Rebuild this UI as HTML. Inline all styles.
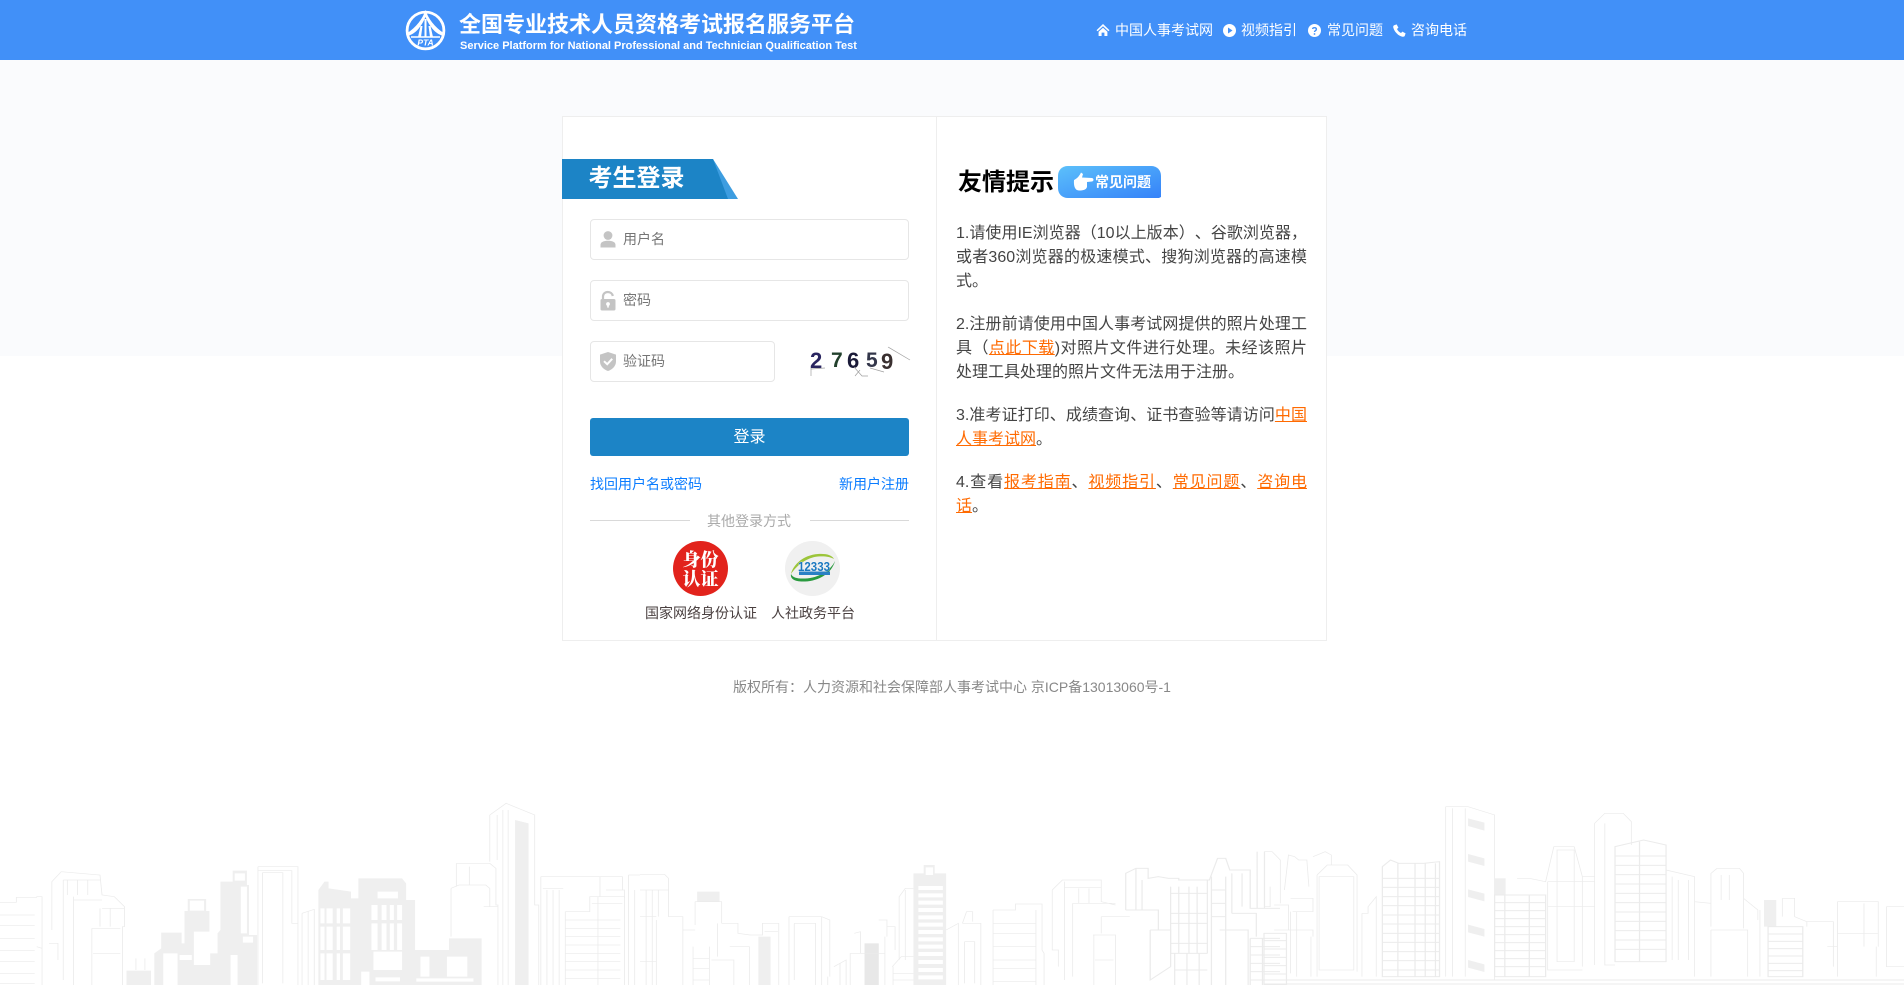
<!DOCTYPE html>
<html lang="zh-CN">
<head>
<meta charset="utf-8">
<title>全国专业技术人员资格考试报名服务平台</title>
<style>
html,body{margin:0;padding:0;width:1904px;height:985px;overflow:hidden;background:#fff;font-family:"Liberation Sans","Noto Sans CJK SC",sans-serif;}
.a{position:absolute;white-space:nowrap;}
a{color:inherit;}
#hd{left:0;top:0;width:1904px;height:60px;background:#4190f8;}
#lt{left:0;top:60px;width:1904px;height:296px;background:#fafbfd;}
#card{left:562px;top:116px;width:763px;height:523px;background:#fff;border:1px solid #eee;}
#div{left:936px;top:117px;width:1px;height:523px;background:#eee;}
.nav{color:#fff;font-size:14px;line-height:20px;top:20px;}
.in{left:590px;box-sizing:border-box;width:319px;height:41px;border:1px solid #e6e6e6;border-radius:4px;background:#fff;}
.ph{left:623px;color:#757575;font-size:14px;line-height:20px;}
.lnk{color:#0a7cff;font-size:14px;line-height:20px;top:474px;}
.tip{left:956px;width:351px;color:#444;font-size:16px;line-height:24px;text-spacing-trim:space-all;}
.tip div{height:24px;white-space:normal;}
.tip .j{text-align:justify;text-align-last:justify;text-justify:inter-character;}
.tip a{color:#ff6a00;text-decoration:underline;}
svg{position:absolute;overflow:visible;}
</style>
</head>
<body>
<div class="a" id="lt"></div>

<!-- skyline -->
<svg style="left:0;top:0" width="1904" height="985" viewBox="0 0 1904 985">
<defs><clipPath id="c"><rect x="0" y="780" width="1904" height="205"/></clipPath></defs>
<g clip-path="url(#c)">
<g transform="translate(0,780) scale(.40816,.33333)" fill="none" stroke="#ebebeb" stroke-width="2">
<g fill="#efefef" stroke="none">
<path d="M378 520L395 505V458H445V490H452V393H460V357H505V393H513V520H533V460L540 450V305H570V272H605V315H610V465H630V615H378Z"/>
<path d="M780 365V330L795 305H805V325L860 335V355H878V295H985L995 310V360H1017V510H1100V475H1180V615H905V575H885V615H780Z"/>
<path d="M1262 120L1295 130V615H1262Z"/>
<path d="M310 572H370V615H310Z"/>
</g>
<g fill="#fff" stroke="none">
<path d="M475 455H515V555H475ZM565 525H582V615H565ZM440 525H470V540H440ZM590 320H605V460H590ZM595 470H620V488H595ZM575 280H600V302H575ZM465 362H500V392H465ZM400 520H435V615H400Z"/>
<path d="M785 385H795V430H785ZM800 385H815V430H800ZM825 385H833V430H825ZM840 385H858V430H840ZM785 440H795V510H785ZM800 440H815V510H800ZM825 440H833V510H825ZM840 440H858V510H840ZM785 520H795V600H785ZM800 520H815V600H800ZM825 520H833V600H825ZM840 520H858V600H840Z"/>
<path d="M910 375H925V420H910ZM935 375H947V420H935ZM955 375H965V420H955ZM973 375H985V420H973ZM910 430H925V510H910ZM935 430H947V510H935ZM955 430H965V510H955ZM973 430H985V510H973ZM915 515H985V570H915ZM925 335H975V355H925ZM1030 530H1052V590H1030ZM1095 530H1145V590H1095ZM1020 595H1160V605H1020ZM920 592H980V604H920Z"/>
</g>
<path d="M0 367H40V352H90V350H103V505L90 500M103 505V615M0 405H85M0 437H85M0 475H85M0 512H85M0 545H85M0 580H85M0 610H85"/>
<path d="M127 305L150 275L245 285L250 345L280 350L305 380V440H300V615M127 305V450M155 300V600M165 300V345M190 300V345M215 300V345M180 350V615M180 360H250M250 385H305M245 385V440M270 385V440M225 445H295M225 445V615M228 520H295M120 490H142V540M155 300H245"/>
<path d="M333 535V570M355 535V570"/>
<path d="M632 260H730V615M632 260V615M643 278H693V610M643 278V610M632 272H715V430H730M715 272V430"/>
<path d="M740 400L770 388V615M740 400V615M755 395V615"/>
<path d="M1200 105L1240 70L1310 105V375H1320V615M1200 105V245M1218 105V240M1232 90V615M1245 90V615M1118 250H1200L1215 265V375H1220V615M1118 250V320M1150 260V315M1105 325L1125 315H1190L1200 325V380M1105 325V470M1185 380H1220"/>
<path d="M1325 290H1525V330M1330 325H1380M1340 330V615M1355 330V615M1370 330V615M1325 290V615M1470 290V350M1485 330H1530V355"/>
<path d="M1385 395H1445V350H1530V615M1385 395V615M1465 350V615M1385 420H1520M1385 445H1520M1385 470H1520M1385 495H1520M1385 520H1520M1385 545H1520M1385 570H1520M1385 595H1520M1450 370H1525"/>
<path d="M1540 285H1568M1540 285V615M1555 330V615"/>
</g>
<g transform="translate(640,780) scale(.40816,.33333)" fill="none" stroke="#ebebeb" stroke-width="2">
<g fill="#efefef" stroke="none">
<path d="M140 335H195V365H140Z"/>
<path d="M290 470H320V615H290Z"/>
<path d="M670 280H695V255H722V280H750V615H670Z"/>
</g>
<path d="M550 490H585V615H550Z" fill="#e8e8e8" stroke="none"/>
<g fill="#fff" stroke="none">
<path d="M682 318H742V330H682ZM682 340H742V352H682ZM682 362H742V374H682ZM682 384H742V396H682ZM682 406H742V418H682ZM682 428H742V440H682ZM682 450H742V462H682ZM682 472H742V484H682ZM682 494H742V506H682ZM682 516H742V528H682ZM682 540H742V552H682ZM682 564H742V576H682ZM682 586H742V598H682ZM700 262H718V285H700Z"/>
</g>
<path d="M130 535H170M130 565H170M130 600H170M130 500V615M170 500V615"/>
<path d="M0 283H60L70 295V410H105V615M0 330H70M15 330V615M30 330V615M45 330V410M40 420V615M0 410H40M0 545H40"/>
<path d="M135 365H200V430M135 365V435M105 450H135M200 430H240V460L270 465H300V430H340V615M190 430V530M175 540H230V615M220 500H268V615M305 455H338"/>
<path d="M365 410H445L465 420V590M365 410V615M378 430H430V615M378 430V600M445 410V615M460 590V615"/>
<path d="M475 560L505 540V615M490 550V615M525 460L540 455V520M515 520V615M515 520H600M585 420H605V470M605 440H625V510M600 470V615M618 560L640 530H670M620 560V615M620 580H670M620 600H670"/>
<path d="M635 420V350L650 325H670M650 330V540M635 420V540"/>
<path d="M790 430H835V615M790 430L800 395H815V425M795 485H820V610M795 485V610M750 450L780 430V615"/>
<path d="M865 390H920V372H985V510L990 520V615M865 390V615M865 430H970M865 460H970M865 500H970M865 540H970M865 565H970M865 605H970M970 390V615"/>
<path d="M1010 330L1035 300H1130V365L1165 375M1010 330V510H1025V560M1040 305V600M1060 370H1165M1060 370V590M1075 325V370M1100 325V370M1130 410H1200M1130 410V460M1110 465H1165V615M1112 465V615M1115 540H1160M1040 322H1130"/>
<g stroke-width="3">
<path d="M1190 390V280L1215 265H1245V295L1270 290L1295 295H1320V300H1395L1415 235H1435L1445 270H1495V385H1512V215M1530 215V385M1495 385H1568"/>
<path d="M1190 390H1270V450M1215 265V390M1230 300V390M1250 450H1300V560L1250 600V450"/>
<path d="M1300 320V520M1320 320V520M1345 320V520M1365 320V520M1390 300V520M1300 340H1390M1300 400H1390M1300 430H1390M1300 490H1390M1300 520H1390M1310 520V615M1340 520V615M1370 520V615M1310 570H1390"/>
<path d="M1400 290V615M1435 290V615M1400 330H1435M1400 370H1435M1400 410H1435M1450 280V400M1475 280V380M1450 400H1510V470M1420 450H1490V615"/>
<path d="M1495 475H1568M1495 500H1568M1495 525H1568M1495 550H1568M1495 575H1568M1495 600H1568M1495 475V615M1525 475V615"/>
</g>
</g>
<g transform="translate(1264,780) scale(.40816,.33333)" fill="none" stroke="#ebebeb" stroke-width="2">
<g fill="#efefef" stroke="none">
<path d="M500 115L540 128V152L500 138ZM500 222L540 235V258L500 245ZM500 328L540 341V364L500 351ZM500 434L540 447V470L500 457ZM500 540L540 553V576L500 563Z"/>
<path d="M565 295H592V345H565Z"/>
<path d="M1225 360H1255V440H1225Z"/>
</g>
<g stroke-width="3">
<path d="M0 600H1568M0 612H1568"/>
<path d="M290 260L310 240L330 250H390L430 245V590H290ZM328 250V590M370 250V590M395 250V590M420 250V590M290 295H430M290 322H430M290 350H430M290 377H430M290 405H430M290 432H430M290 460H430M290 487H430M290 515H430M290 542H430M290 570H430"/>
<path d="M565 345H690V590H565ZM590 345V590M650 345V590M565 368H690M565 392H690M565 416H690M565 440H690M565 464H690M565 488H690M565 512H690M565 536H690M565 560H690"/>
<path d="M860 200L930 180L985 195V545H860ZM920 185V545M860 228H985M860 256H985M860 284H985M860 312H985M860 340H985M860 368H985M860 396H985M860 424H985M860 452H985M860 480H985M860 508H985"/>
<path d="M0 460H55V615H0ZM0 482H55M0 507H55M0 532H55M0 557H55M0 582H55"/>
<path d="M1235 440H1320V590H1235ZM1235 462H1320M1235 484H1320M1235 506H1320M1235 528H1320M1235 550H1320M1235 572H1320"/>
</g>
<path d="M0 215L20 215L40 240V370M0 380H15V320M50 330L60 225L75 230L85 240H105L110 320M120 230L150 215L165 225V255M65 355H120V395H70M80 395V590M25 375H60V450M25 450H120V470M115 470V590M65 395V580"/>
<path d="M130 285L155 255H205L228 285V575M130 285V590M135 290H220V570H135Z"/>
<path d="M240 400H255V380L275 350V590M240 400V590"/>
<path d="M445 80H500L565 105V600M445 80V590M462 85V590M493 85V590"/>
<path d="M620 295H650L690 305L710 200H760L780 290H810V130L835 100H880L900 125V185M718 210H760V545H718ZM695 305H810M695 380H810M695 305V570H780M780 290V560M835 130V555H860M810 130V555M900 125V195"/>
<path d="M985 270L1055 290V365L1095 370V280L1110 265H1165L1175 280V355L1210 390V420M1000 290V540M1015 300V540M1040 300V540M1055 290V590M1120 285V360M1140 285V360M1095 370V440"/>
<path d="M1095 450H1185V590M1095 450V590M1175 355V445"/>
<path d="M1270 355H1300V410L1330 425V440M1270 355V410M1215 390V590M1330 425H1395V560"/>
<path d="M1405 365H1505V500M1405 365V500M1470 370V500M1405 460H1505M1405 500V590M1500 500V590M1380 500H1405"/>
<path d="M1525 380H1568M1525 380V560H1568"/>
</g>
</g>
</svg>

<div class="a" id="hd"></div>
<!-- logo -->
<svg style="left:405px;top:9px" width="41" height="42" viewBox="0 0 41 42">
<circle cx="20.5" cy="21.5" r="18.4" fill="none" stroke="#fff" stroke-width="2.8"/>
<path d="M20.500 1C18 9 11.500 18.500 1.500 24.500L3 27C11 24 15.500 19 20.500 8C25.500 19 30 24 38 27L39.500 24.500C29.500 18.500 23 9 20.500 1Z" fill="#fff"/>
<path d="M15.500 17L13 28H16L17.500 17ZM25.500 17L28 28H25L23.500 17ZM19.500 10H21.500V28H19.500Z" fill="#fff"/>
<path d="M6 28H35" stroke="#fff" stroke-width="1.6"/>
<text x="20.500" y="36.500" text-anchor="middle" font-family="Liberation Sans" font-size="8.500" font-weight="700" font-style="italic" fill="#fff">PTA</text>
</svg>
<div class="a" style="left:459px;top:9px;color:#fff;font-size:22px;font-weight:700;line-height:32px;">全国专业技术人员资格考试报名服务平台</div>
<div class="a" style="left:460px;top:39px;color:#fff;font-size:11px;font-weight:700;line-height:14px;">Service Platform for National Professional and Technician Qualification Test</div>

<!-- nav -->
<svg style="left:1096px;top:23px" width="14" height="14" viewBox="0 0 14 14"><path d="M7 1L0.5 7.2L1.6 8.2L7 3.2L12.4 8.2L13.5 7.2ZM2.6 8.8V13H5.6V9.6H8.4V13H11.4V8.8L7 4.7Z" fill="#fff"/></svg>
<div class="a nav" style="left:1115px;">中国人事考试网</div>
<svg style="left:1223px;top:24px" width="13" height="13" viewBox="0 0 13 13"><circle cx="6.5" cy="6.5" r="6.5" fill="#fff"/><path d="M5 3.5L9.5 6.5L5 9.5Z" fill="#4190f8"/></svg>
<div class="a nav" style="left:1241px;">视频指引</div>
<svg style="left:1308px;top:24px" width="13" height="13" viewBox="0 0 13 13"><circle cx="6.5" cy="6.5" r="6.5" fill="#fff"/><path d="M4.6 5C4.8 3.2 8.4 3.2 8.4 5.2C8.4 6.6 6.5 6.5 6.5 8" fill="none" stroke="#4190f8" stroke-width="1.4"/><circle cx="6.5" cy="10" r=".9" fill="#4190f8"/></svg>
<div class="a nav" style="left:1327px;">常见问题</div>
<svg style="left:1393px;top:24px" width="13" height="13" viewBox="0 0 13 13"><path d="M1.2 1.2L3.6.4L5.4 3.6L4 5C4.8 6.8 6.2 8.2 8 9L9.4 7.6L12.6 9.4L11.8 11.8C11.4 12.8 10.2 13 9 12.6C5 11.4 1.6 8 .4 4C0 2.8.2 1.6 1.2 1.2Z" fill="#fff"/></svg>
<div class="a nav" style="left:1411px;">咨询电话</div>

<!-- card -->
<div class="a" id="card"></div>
<div class="a" id="div"></div>

<!-- banner -->
<svg style="left:562px;top:159px" width="176" height="40" viewBox="0 0 176 40">
<path d="M151 0L176 40H150Z" fill="#3d9de0"/>
<path d="M0 0H151L166 40H0Z" fill="#1c84c6"/>
</svg>
<div class="a" style="left:588.500px;top:162px;color:#fff;font-size:24px;font-weight:700;line-height:34px;">考生登录</div>

<!-- inputs -->
<div class="a in" style="top:219px;"></div>
<svg style="left:600px;top:231px" width="16" height="17" viewBox="0 0 16 17"><circle cx="8" cy="4.5" r="4.4" fill="#c4c4c4"/><path d="M.5 16.5V14C.5 11 4 9.8 8 9.8S15.5 11 15.5 14V16.5Z" fill="#c4c4c4"/></svg>
<div class="a ph" style="top:229px;">用户名</div>

<div class="a in" style="top:280px;"></div>
<svg style="left:600px;top:291px" width="16" height="20" viewBox="0 0 16 20"><path d="M3 9V5.5C3 2.8 5.2 1 7.8 1C10.4 1 12.4 2.7 12.8 5" fill="none" stroke="#c4c4c4" stroke-width="2.2"/><rect x=".5" y="8" width="15" height="11.5" rx="1.6" fill="#c4c4c4"/><circle cx="8" cy="13" r="1.9" fill="#fff"/><rect x="7.2" y="13" width="1.6" height="3.6" fill="#fff"/></svg>
<div class="a ph" style="top:290px;">密码</div>

<div class="a in" style="top:341px;width:185px;"></div>
<svg style="left:600px;top:352px" width="16" height="19" viewBox="0 0 16 19"><path d="M8 0L16 2.6V9.5C16 14 12.5 17.4 8 19C3.5 17.4 0 14 0 9.5V2.6Z" fill="#c4c4c4"/><path d="M4 9.2L7.2 12.2L12.2 6.8" fill="none" stroke="#fff" stroke-width="2"/></svg>
<div class="a ph" style="top:351px;">验证码</div>

<!-- captcha -->
<svg style="left:808px;top:343px" width="102" height="36" viewBox="0 0 102 36" font-family="Liberation Sans" font-weight="700" font-size="22">
<text x="2" y="25" fill="#2a2560">2</text>
<text x="23" y="24" fill="#22402c" font-size="21">7</text>
<text x="39" y="25" fill="#1a1a38">6</text>
<text x="58" y="24" fill="#33364a" font-size="21">5</text>
<text x="73" y="26" fill="#3a3030">9</text>
<path d="M80 4L102 17M3 25V33M3 26L17 25M46 24L54 33L60 33M47 33L52 27M62 25L76 29" fill="none" stroke="#a0a0a0" stroke-width=".7"/>
</svg>

<!-- button -->
<div class="a" style="left:590px;top:418px;width:319px;height:38px;background:#1c84c6;border-radius:3px;color:#fff;font-size:16px;line-height:40px;text-align:center;">登录</div>

<!-- links -->
<div class="a lnk" style="left:590px;">找回用户名或密码</div>
<div class="a lnk" style="left:839px;">新用户注册</div>

<!-- other -->
<div class="a" style="left:590px;top:520px;width:100px;height:1px;background:#d9d9d9;"></div>
<div class="a" style="left:810px;top:520px;width:99px;height:1px;background:#d9d9d9;"></div>
<div class="a" style="left:707px;top:511px;color:#aaa;font-size:14px;line-height:20px;">其他登录方式</div>

<!-- badges -->
<svg style="left:673px;top:541px" width="55" height="55" viewBox="0 0 55 55">
<circle cx="27.5" cy="27.5" r="27.5" fill="#e2231c"/>
<text x="27.5" y="25" text-anchor="middle" font-family="Noto Serif CJK SC,serif" font-weight="900" font-size="18" fill="#fff">身份</text>
<text x="27.5" y="44.500" text-anchor="middle" font-family="Noto Serif CJK SC,serif" font-weight="900" font-size="18" fill="#fff">认证</text>
</svg>
<svg style="left:785px;top:541px" width="55" height="55" viewBox="0 0 55 55">
<circle cx="27.5" cy="27.5" r="27.5" fill="#f0f0f0"/>
<path d="M6 33C8 24 18 14 33 13C41 12.500 47 14 49 18C45 15.500 39 15 33 15.500C22 16.500 12 24 6 33Z" fill="#9cc53a"/>
<path d="M6 33C5 38 10 41 20 40.500C34 40 47 32 50 20C46 29 34 37 20 37.500C13 37.800 8 37 6 33Z" fill="#2a9a3f"/>
<rect x="14" y="30.500" width="31" height="3.500" fill="#2a80c4"/>
<text x="29" y="30" text-anchor="middle" font-family="Liberation Sans" font-weight="700" font-size="13" textLength="32" lengthAdjust="spacingAndGlyphs" fill="#1b78bf" stroke="#fff" stroke-width=".4" paint-order="stroke">12333</text>
</svg>
<div class="a" style="left:645px;top:603px;color:#4a4040;font-size:14px;line-height:20px;">国家网络身份认证</div>
<div class="a" style="left:771px;top:603px;color:#4a4040;font-size:14px;line-height:20px;">人社政务平台</div>

<!-- right -->
<div class="a" style="left:958px;top:166px;color:#000;font-size:24px;font-weight:700;line-height:34px;">友情提示</div>
<svg style="left:1058px;top:166px" width="103" height="32" viewBox="0 0 103 32">
<defs><linearGradient id="g" x1="0" y1="0" x2="1" y2="1"><stop offset="0" stop-color="#5cc0fa"/><stop offset="1" stop-color="#3582f9"/></linearGradient></defs>
<path d="M10 0H93C99 0 103 4 103 10V31L101 32H10C4 32 0 28 0 22V10C0 4 4 0 10 0Z" fill="url(#g)"/>
<path d="M16 14C18 13 21 11 23 6.500L25 8L24 11.500L34 12C36 12.500 36 15 34 15.500L29 16L29 21C28 24 25 24.500 21 24.500C17 24.500 15.500 20 16 14Z" fill="#fff"/>
<text x="37" y="21" font-family="Liberation Sans,Noto Sans CJK SC,sans-serif" font-weight="700" font-size="14" fill="#fff">常见问题</text>
</svg>

<div class="a tip" style="top:222px;"><div class="j">1.请使用IE浏览器（10以上版本）、谷歌浏览器，</div><div class="j">或者360浏览器的极速模式、搜狗浏览器的高速模</div><div>式。</div></div>
<div class="a tip" style="top:313px;"><div class="j">2.注册前请使用中国人事考试网提供的照片处理工</div><div class="j">具（<a>点此下载</a>)对照片文件进行处理。未经该照片</div><div>处理工具处理的照片文件无法用于注册。</div></div>
<div class="a tip" style="top:404px;"><div class="j">3.准考证打印、成绩查询、证书查验等请访问<a>中国</a></div><div><a>人事考试网</a>。</div></div>
<div class="a tip" style="top:471px;"><div class="j">4.查看<a>报考指南</a>、<a>视频指引</a>、<a>常见问题</a>、<a>咨询电</a></div><div><a>话</a>。</div></div>

<!-- footer -->
<div class="a" style="left:733px;top:677px;color:#888;font-size:14px;line-height:20px;">版权所有：人力资源和社会保障部人事考试中心 京ICP备13013060号-1</div>
</body>
</html>
